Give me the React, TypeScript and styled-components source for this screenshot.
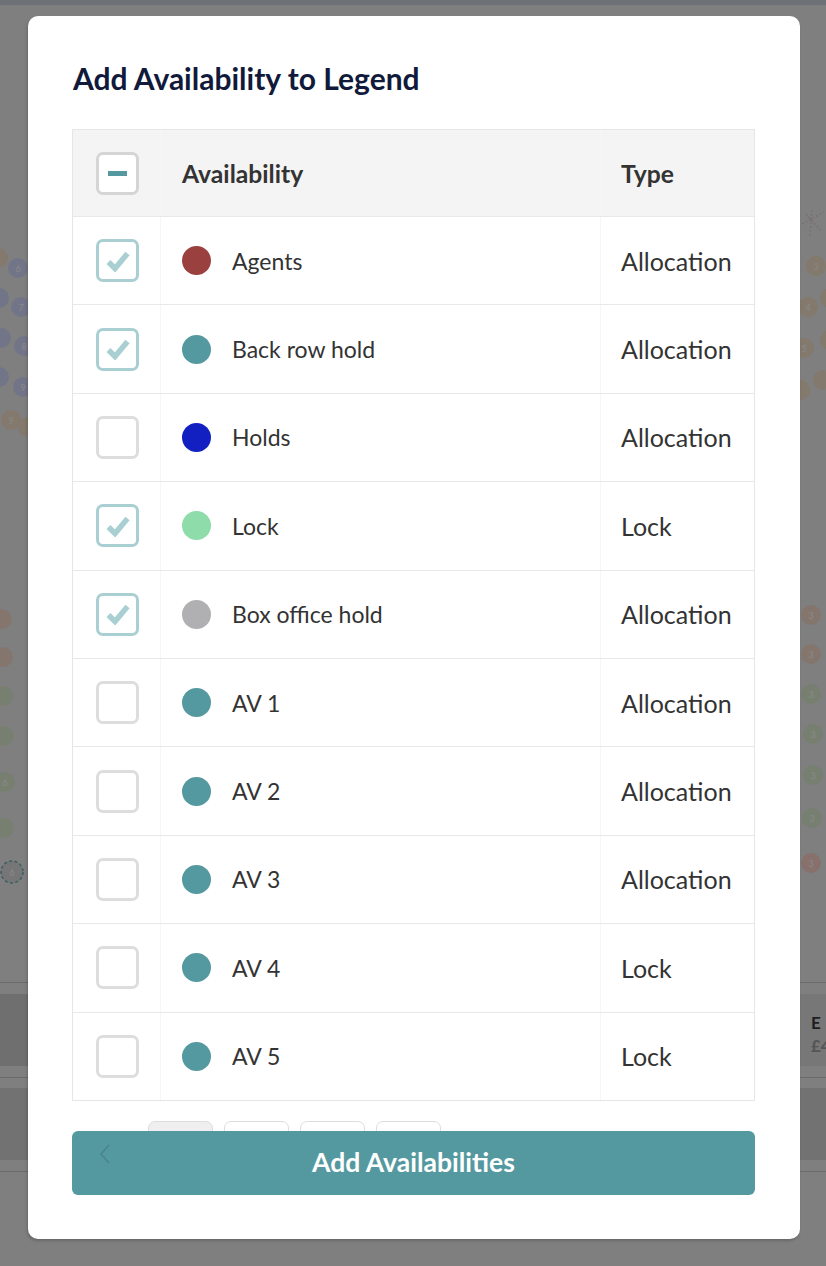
import React from "react";
import styled, { createGlobalStyle } from "styled-components";

const Global = createGlobalStyle`
  html, body { margin: 0; padding: 0; }
  body { font-family: Lato, "Open Sans", sans-serif; background: #7f7f7f; }
  * { box-sizing: border-box; }
`;

const Page = styled.div`
  position: relative;
  width: 826px;
  height: 1266px;
  overflow: hidden;
  background: #7f7f7f;
  padding: 16px 26px 0 28px;
`;

const Backdrop = styled.svg`
  position: absolute;
  inset: 0;
  width: 826px;
  height: 1266px;
`;

const Modal = styled.div`
  position: relative;
  width: 772px;
  height: 1223px;
  background: #ffffff;
  border-radius: 10px;
  box-shadow: -1px 2px 3px rgba(0, 0, 0, 0.18);
  padding: 44px 45px 0 44px;
  display: flex;
  flex-direction: column;
`;

const Title = styled.h2`
  margin: 0 0 0 1px;
  font-family: Lato, sans-serif;
  font-weight: 700;
  font-size: 30px;
  line-height: 36px;
  color: #111a3b;
`;

const Table = styled.div`
  margin-top: 33px;
  border: 1px solid #e6e6e6;
  display: flex;
  flex-direction: column;
`;

const Row = styled.div<{ $head?: boolean }>`
  display: grid;
  grid-template-columns: 87px 440px 1fr;
  height: ${(p) => (p.$head ? "86px" : "88.4px")};
  background: ${(p) => (p.$head ? "#f4f4f4" : "#ffffff")};
  border-top: ${(p) => (p.$head ? "none" : "1px solid #e8e8e8")};
`;

const Cell = styled.div<{ $divider?: boolean; $pad?: number; $size?: number }>`
  display: flex;
  align-items: center;
  padding-left: ${(p) => p.$pad ?? 0}px;
  border-left: ${(p) => (p.$divider ? "1px solid #f6f6f6" : "none")};
  font-family: Lato, sans-serif;
  font-size: ${(p) => p.$size ?? 23}px;
  color: #333333;
`;

const CheckCell = styled(Cell)`
  justify-content: center;
  padding-left: 2px;
`;

const HeadText = styled.span`
  font-weight: 700;
  font-size: 24.7px;
  color: #333333;
`;

const Box = styled.div<{ $state: "on" | "off" | "mixed" }>`
  width: 43px;
  height: 43px;
  border-radius: 7px;
  border: 3px solid
    ${(p) => (p.$state === "on" ? "#a9cfd2" : p.$state === "mixed" ? "#d5d5d5" : "#dddddd")};
  background: #ffffff;
  display: flex;
  align-items: center;
  justify-content: center;
`;

const Dash = styled.div`
  width: 19px;
  height: 5px;
  background: #5599a0;
`;

const Dot = styled.span<{ $color: string }>`
  width: 29px;
  height: 29px;
  border-radius: 50%;
  background: ${(p) => p.$color};
  flex: none;
  margin-right: 21px;
`;

const Footer = styled.div`
  display: grid;
  margin-top: 20px;
`;

const Pager = styled.div`
  grid-area: 1 / 1;
  display: flex;
  gap: 11px;
  align-items: flex-start;
`;

const PageBox = styled.div<{ $active?: boolean }>`
  width: 65px;
  height: 64px;
  border: 1px solid #dedede;
  border-radius: 7px;
  background: ${(p) => (p.$active ? "#efefef" : "#ffffff")};
`;

const Prev = styled.div`
  position: relative;
  z-index: 1;
  width: 65px;
  height: 64px;
  display: flex;
  align-items: center;
  justify-content: center;
  padding-top: 2px;
`;

const AddButton = styled.button`
  grid-area: 1 / 1;
  margin-top: 10px;
  height: 64px;
  width: 100%;
  border: none;
  border-radius: 6px;
  background: #5599a0;
  color: #ffffff;
  font-family: Lato, sans-serif;
  font-weight: 700;
  font-size: 26.5px;
  cursor: pointer;
  padding: 0 0 2px 0;
`;

type Item = { name: string; color: string; type: string; checked: boolean };

const items: Item[] = [
  { name: "Agents", color: "#9a403e", type: "Allocation", checked: true },
  { name: "Back row hold", color: "#5599a0", type: "Allocation", checked: true },
  { name: "Holds", color: "#1220c2", type: "Allocation", checked: false },
  { name: "Lock", color: "#8ddcaa", type: "Lock", checked: true },
  { name: "Box office hold", color: "#b0b0b2", type: "Allocation", checked: true },
  { name: "AV 1", color: "#5599a0", type: "Allocation", checked: false },
  { name: "AV 2", color: "#5599a0", type: "Allocation", checked: false },
  { name: "AV 3", color: "#5599a0", type: "Allocation", checked: false },
  { name: "AV 4", color: "#5599a0", type: "Lock", checked: false },
  { name: "AV 5", color: "#5599a0", type: "Lock", checked: false },
];

const Check = () => (
  <svg width="24" height="22" viewBox="0 0 24 22">
    <path d="M2.5 12 L9 18.5 L21.5 3.5" fill="none" stroke="#a9cfd2" strokeWidth="5.5" strokeLinejoin="miter" />
  </svg>
);

type Seat = { x: number; y: number; c: string; n?: string; dashed?: boolean };

const blue = "#727588";
const tan = "#83796c";
const green = "#777f71";
const rust = "#84766d";
const red = "#88706d";

const seats: Seat[] = [
  { x: -2, y: 258, c: tan },
  { x: 18, y: 268, c: blue, n: "6" },
  { x: -1, y: 298, c: blue },
  { x: 21, y: 307, c: blue, n: "7" },
  { x: 1, y: 338, c: blue },
  { x: 24, y: 346, c: blue, n: "8" },
  { x: -1, y: 377, c: blue },
  { x: 23, y: 387, c: blue, n: "9" },
  { x: 11, y: 420, c: tan, n: "9" },
  { x: 28, y: 427, c: tan },
  { x: 2, y: 619, c: rust },
  { x: 3, y: 657, c: rust },
  { x: 3, y: 696, c: green },
  { x: 4, y: 736, c: green },
  { x: 5, y: 782, c: green, n: "6" },
  { x: 4, y: 828, c: green },
  { x: 12, y: 872, c: "none", n: "6", dashed: true },
  { x: 816, y: 266, c: tan, n: "3" },
  { x: 808, y: 307, c: tan, n: "4" },
  { x: 830, y: 298, c: tan },
  { x: 804, y: 348, c: tan, n: "5" },
  { x: 830, y: 340, c: tan },
  { x: 823, y: 380, c: tan },
  { x: 800, y: 390, c: tan },
  { x: 811, y: 615, c: rust, n: "3" },
  { x: 811, y: 654, c: rust, n: "3" },
  { x: 811, y: 694, c: green, n: "3" },
  { x: 813, y: 734, c: green, n: "3" },
  { x: 813, y: 775, c: green, n: "3" },
  { x: 812, y: 818, c: green, n: "3" },
  { x: 811, y: 863, c: red, n: "3" },
];

const SeatMap = () => (
  <Backdrop viewBox="0 0 826 1266">
    <rect x="0" y="0" width="826" height="1266" fill="#7f7f7f" />
    <rect x="0" y="0" width="826" height="5" fill="#6e7278" />
    {seats.map((s, i) => (
      <g key={i}>
        <circle
          cx={s.x}
          cy={s.y}
          r={s.dashed ? 11 : 10}
          fill={s.c === "none" ? "#767676" : s.c}
          stroke={s.dashed ? "#3d5f66" : "none"}
          strokeWidth={s.dashed ? 1.6 : 0}
          strokeDasharray={s.dashed ? "3 2.4" : undefined}
        />
        {s.n && (
          <text x={s.x} y={s.y + 3.5} fontSize="9" textAnchor="middle" fill="#8a8a8a" fontFamily="Lato, sans-serif">
            {s.n}
          </text>
        )}
      </g>
    ))}
    <path d="M802 224 L824 212 M806 214 L822 232 M812 210 L810 236" stroke="#7a6e6e" strokeWidth="1.3" strokeDasharray="2 2" fill="none" />
    <rect x="0" y="982" width="826" height="1" fill="#6b6b6b" />
    <rect x="0" y="994" width="826" height="72" fill="#6f6f6f" />
    <rect x="800" y="994" width="26" height="72" fill="#777777" />
    <rect x="0" y="1077" width="826" height="1" fill="#6b6b6b" />
    <rect x="0" y="1088" width="826" height="72" fill="#727272" />
    <rect x="0" y="1171" width="826" height="1" fill="#6b6b6b" />
    <text x="811" y="1029" fontSize="17" fontWeight="700" fill="#1e1e1e" fontFamily="Lato, sans-serif">E</text>
    <text x="811" y="1052" fontSize="17" fontWeight="700" fill="#555555" fontFamily="Lato, sans-serif">£4</text>
  </Backdrop>
);

export default function App() {
  const state = (c: boolean) => (c ? "on" : "off");
  return (
    <>
      <Global />
      <Page>
        <SeatMap />
        <Modal>
          <Title>Add Availability to Legend</Title>
          <Table>
            <Row $head>
              <CheckCell>
                <Box $state="mixed">
                  <Dash />
                </Box>
              </CheckCell>
              <Cell $divider $pad={21}>
                <HeadText>Availability</HeadText>
              </Cell>
              <Cell $divider $pad={20}>
                <HeadText>Type</HeadText>
              </Cell>
            </Row>
            {items.map((it) => (
              <Row key={it.name}>
                <CheckCell>
                  <Box $state={state(it.checked)}>{it.checked && <Check />}</Box>
                </CheckCell>
                <Cell $divider $pad={21}>
                  <Dot $color={it.color} />
                  {it.name}
                </Cell>
                <Cell $divider $pad={20} $size={25}>
                  {it.type}
                </Cell>
              </Row>
            ))}
          </Table>
          <Footer>
            <Pager>
              <Prev>
                <svg width="14" height="22" viewBox="0 0 14 22">
                  <path d="M11 2 L3 11 L11 20" fill="none" stroke="#4a858c" strokeWidth="1.6" />
                </svg>
              </Prev>
              <PageBox $active />
              <PageBox />
              <PageBox />
              <PageBox />
            </Pager>
            <AddButton>Add Availabilities</AddButton>
          </Footer>
        </Modal>
      </Page>
    </>
  );
}
